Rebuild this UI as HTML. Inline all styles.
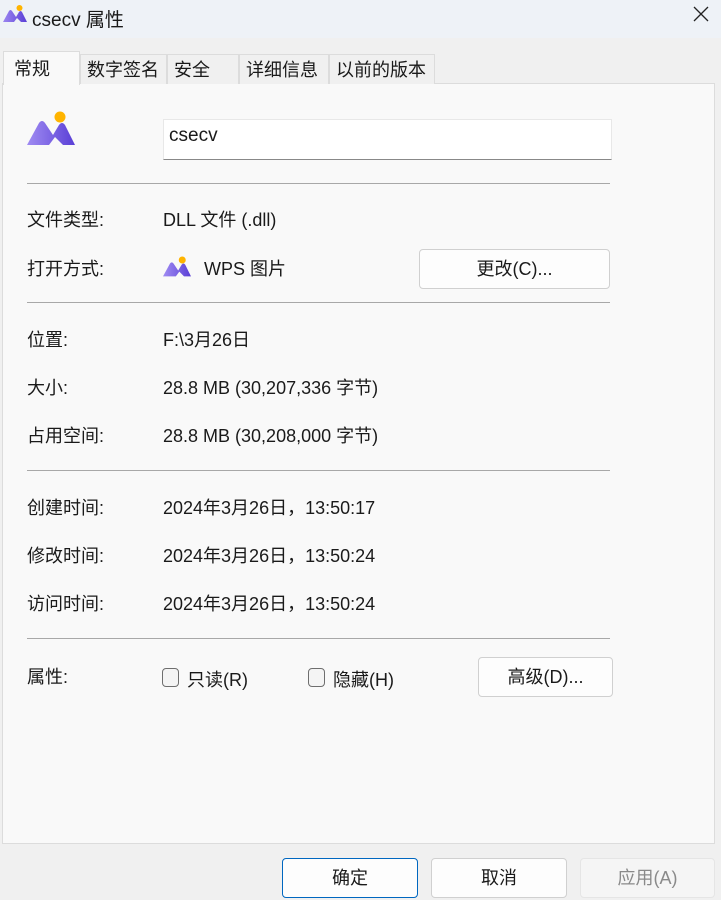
<!DOCTYPE html>
<html><head><meta charset="utf-8"><style>
*{margin:0;padding:0;box-sizing:border-box}
body{width:721px;height:900px;background:#f0f0f0;font-family:"Liberation Sans","Noto Sans CJK SC",sans-serif;font-size:18px;color:#1a1a1a;position:relative;overflow:hidden}
.a{position:absolute;white-space:nowrap}
.title{left:0;top:0;width:721px;height:38px;background:#eef2f7}
.tab{position:absolute;top:54px;height:30px;background:#f0f0f0;border:1px solid #dcdcdc;border-bottom:none;font-size:18px;line-height:30px;padding-left:6px}
.panel{left:2px;top:83px;width:713px;height:761px;background:#f9f9f9;border:1px solid #dcdcdc}
.sep{position:absolute;left:27px;width:583px;height:1px;background:#a8a8a8}
.btn{position:absolute;background:#fdfdfd;border:1px solid #d0d0d0;border-radius:4px;text-align:center;font-size:18px}
.cb{position:absolute;width:17px;height:19px;border:1px solid #6e6e6e;border-radius:4px;background:#f4f4f4}
</style></head><body>
<div class="a title"></div>
<svg class="a" style="left:3px;top:5px" width="24" height="18" viewBox="0 0 48 36"><defs><linearGradient id="g" x1="0" x2="1"><stop offset="0" stop-color="#9c86f0"/><stop offset="1" stop-color="#5a3fd6"/></linearGradient></defs><path d="M0 34 L12 12 Q15 8 18 12 L26 24 L32 14 Q35 10 38 14 L48 34 L36 34 L28 26 L22 34 Z" fill="url(#g)"/><circle cx="33" cy="6" r="6" fill="#ffb400"/></svg>
<div class="a" style="left:32px;top:5px;font-size:19px">csecv 属性</div>
<svg class="a" style="left:693px;top:6px" width="16" height="16" viewBox="0 0 16 16"><path d="M1 1L15 15M15 1L1 15" stroke="#222" stroke-width="1.3"/></svg>
<div class="a panel"></div>
<div class="tab" style="left:80px;width:87px">数字签名</div>
<div class="tab" style="left:167px;width:72px">安全</div>
<div class="tab" style="left:239px;width:90px">详细信息</div>
<div class="tab" style="left:329px;width:106px">以前的版本</div>
<div class="tab" style="left:3px;top:51px;height:34px;width:77px;background:#f9f9f9;line-height:34px;padding-left:10px">常规</div>
<svg class="a" style="left:27px;top:111px" width="48" height="36" viewBox="0 0 48 36"><defs><linearGradient id="g2" x1="0" x2="1"><stop offset="0" stop-color="#a08cf2"/><stop offset="1" stop-color="#5a3fd6"/></linearGradient></defs><path d="M0 34 L12 12 Q15 8 18 12 L26 24 L32 14 Q35 10 38 14 L48 34 L36 34 L28 26 L22 34 Z" fill="url(#g2)"/><circle cx="33" cy="6" r="5.5" fill="#ffb400"/></svg>
<div class="a" style="left:163px;top:119px;width:449px;height:41px;background:#fff;border-bottom:1px solid #888;border-top:1px solid #e8e8e8;border-left:1px solid #e8e8e8;border-right:1px solid #e8e8e8;padding:5px 0 0 5px;font-size:19px">csecv</div>
<div class="sep" style="top:183px"></div>
<div class="a" style="left:27px;top:206px">文件类型:</div><div class="a" style="left:163px;top:206px">DLL 文件 (.dll)</div>
<div class="a" style="left:27px;top:255px">打开方式:</div>
<svg class="a" style="left:163px;top:256px" width="28" height="22" viewBox="0 0 48 36"><path d="M0 34 L12 12 Q15 8 18 12 L26 24 L32 14 Q35 10 38 14 L48 34 L36 34 L28 26 L22 34 Z" fill="url(#g2)"/><circle cx="33" cy="6" r="6" fill="#ffb400"/></svg>
<div class="a" style="left:204px;top:255px">WPS 图片</div>
<div class="btn" style="left:419px;top:249px;width:191px;height:40px;line-height:38px">更改(C)...</div>
<div class="sep" style="top:302px"></div>
<div class="a" style="left:27px;top:326px">位置:</div><div class="a" style="left:163px;top:326px">F:\3月26日</div>
<div class="a" style="left:27px;top:374px">大小:</div><div class="a" style="left:163px;top:374px">28.8 MB (30,207,336 字节)</div>
<div class="a" style="left:27px;top:422px">占用空间:</div><div class="a" style="left:163px;top:422px">28.8 MB (30,208,000 字节)</div>
<div class="sep" style="top:470px"></div>
<div class="a" style="left:27px;top:494px">创建时间:</div><div class="a" style="left:163px;top:494px">2024年3月26日，13:50:17</div>
<div class="a" style="left:27px;top:542px">修改时间:</div><div class="a" style="left:163px;top:542px">2024年3月26日，13:50:24</div>
<div class="a" style="left:27px;top:590px">访问时间:</div><div class="a" style="left:163px;top:590px">2024年3月26日，13:50:24</div>
<div class="sep" style="top:638px"></div>
<div class="a" style="left:27px;top:663px">属性:</div>
<div class="cb" style="left:162px;top:668px"></div><div class="a" style="left:187px;top:666px">只读(R)</div>
<div class="cb" style="left:308px;top:668px"></div><div class="a" style="left:333px;top:666px">隐藏(H)</div>
<div class="btn" style="left:478px;top:657px;width:135px;height:40px;line-height:38px">高级(D)...</div>
<div class="btn" style="left:282px;top:858px;width:136px;height:40px;line-height:38px;border-color:#0067c0">确定</div>
<div class="btn" style="left:431px;top:858px;width:136px;height:40px;line-height:38px">取消</div>
<div class="btn" style="left:580px;top:858px;width:135px;height:40px;line-height:38px;background:#f5f5f5;border-color:#e5e5e5;color:#8a8a8a">应用(A)</div>
</body></html>
